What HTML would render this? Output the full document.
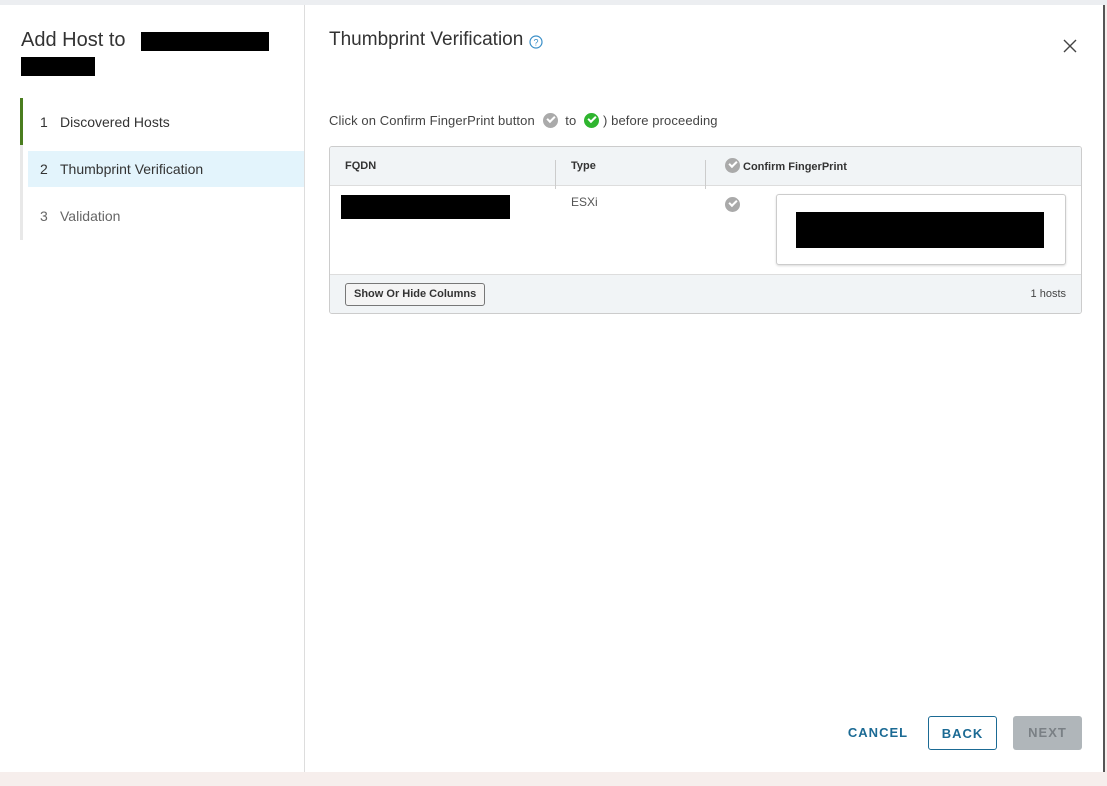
<!DOCTYPE html>
<html><head><style>
*{box-sizing:border-box;margin:0;padding:0}
body{width:1107px;height:786px;background:#f6eeec;font-family:"Liberation Sans",sans-serif;position:relative;overflow:hidden;color:#333}
.top{position:absolute;left:0;top:0;width:1107px;height:5px;background:#eceef1}
.modal{position:absolute;left:0;top:5px;width:1105px;height:767px;background:#fff;border-right:2px solid #555}
.side{position:absolute;left:0;top:0;width:305px;height:767px;border-right:1px solid #ddd}
.h1{position:absolute;left:21px;top:24px;font-size:20px;color:#333}
.blk{position:absolute;background:#000}
.steps{position:absolute;left:20px;top:93px;width:3px;height:142px;background:#e8e8e8}
.stepbar{position:absolute;left:20px;top:93px;width:3px;height:47px;background:#4a7d1f}
.step{position:absolute;left:28px;width:276px;height:36px;font-size:14px;line-height:36px;padding-left:12px}
.step span{display:inline-block;width:20px}
.title{position:absolute;left:329px;top:24px;font-size:19px;color:#333}
.close{position:absolute;left:1063px;top:34px}
.msg{position:absolute;left:329px;top:108px;font-size:13px;color:#444;letter-spacing:0.1px}
.ci{display:inline-block;width:15px;height:15px;border-radius:50%;vertical-align:-3px;position:relative;margin:0 4px}
.ci:after{content:"";position:absolute;left:4px;top:3px;width:6px;height:3px;border-left:2px solid #fff;border-bottom:2px solid #fff;transform:rotate(-45deg)}
.grid{position:absolute;left:329px;top:141px;width:753px;height:168px;border:1px solid #ccc;border-radius:3px;overflow:hidden}
.hd{position:absolute;left:0;top:0;width:100%;height:39px;background:#f1f4f6;border-bottom:1px solid #ddd;font-size:11px;font-weight:bold;color:#333}
.hd div{position:absolute;top:13px}
.sep{position:absolute;top:5px;width:1px;height:29px;background:#ccc}
.ft{position:absolute;left:0;top:127px;width:100%;height:40px;background:#f1f4f6;border-top:1px solid #ddd}
.btn{position:absolute;font-size:13px;font-weight:bold;letter-spacing:1px;text-align:center;line-height:34px;height:34px;border-radius:3px}
</style></head><body>
<div class="top"></div>
<div class="modal">
 <div class="side">
  <div class="h1">Add Host to</div>
  <div class="blk" style="left:141px;top:27px;width:128px;height:19px"></div>
  <div class="blk" style="left:21px;top:52px;width:74px;height:19px"></div>
  <div class="steps"></div><div class="stepbar"></div>
  <div class="step" style="top:99px;color:#333"><span>1</span>Discovered Hosts</div>
  <div class="step" style="top:146px;background:#e3f4fc;color:#333"><span>2</span>Thumbprint Verification</div>
  <div class="step" style="top:193px;color:#666"><span>3</span>Validation</div>
 </div>
 <div class="title">Thumbprint Verification <svg width="14" height="14" viewBox="0 0 14 14" style="vertical-align:-4px"><circle cx="7" cy="7" r="6" fill="none" stroke="#3a8fc8" stroke-width="1.2"/><text x="7" y="10.5" font-size="9" text-anchor="middle" fill="#3a8fc8" font-family="Liberation Sans">?</text></svg></div>
 <svg class="close" width="14" height="14" viewBox="0 0 14 14"><path d="M1 1L13 13M13 1L1 13" stroke="#444" stroke-width="1.4"/></svg>
 <div class="msg">Click on Confirm FingerPrint button <i class="ci" style="background:#aaa"></i> to <i class="ci" style="background:#2fb52f"></i>) before proceeding</div>
 <div class="grid">
  <div class="hd">
   <div style="left:15px">FQDN</div><div class="sep" style="left:225px"></div>
   <div style="left:241px">Type</div><div class="sep" style="left:375px"></div>
   <div style="left:395px;top:11px"><i class="ci" style="background:#aaa;margin:0 3px 0 0"></i>Confirm FingerPrint</div>
  </div>
  <div class="blk" style="left:11px;top:48px;width:169px;height:24px"></div>
  <div style="position:absolute;left:241px;top:48px;font-size:12px;color:#555">ESXi</div>
  <i class="ci" style="background:#aaa;position:absolute;left:395px;top:50px;margin:0"></i>
  <div style="position:absolute;left:446px;top:47px;width:290px;height:71px;border:1px solid #ccc;border-radius:3px;background:#fff;box-shadow:0 1px 2px rgba(0,0,0,.15)"></div>
  <div class="blk" style="left:466px;top:65px;width:248px;height:36px"></div>
  <div class="ft">
   <div style="position:absolute;left:15px;top:8px;height:23px;padding:0 8px;border:1px solid #777;border-radius:3px;background:#f4f4f4;font-size:11px;font-weight:bold;line-height:21px">Show Or Hide Columns</div>
   <div style="position:absolute;right:15px;top:13px;font-size:11px;color:#444">1 hosts</div>
  </div>
 </div>
 <div class="btn" style="left:843px;top:711px;width:70px;color:#1b6a94">CANCEL</div>
 <div class="btn" style="left:928px;top:711px;width:69px;border:1px solid #1b6a94;color:#1b6a94">BACK</div>
 <div class="btn" style="left:1013px;top:711px;width:69px;background:#b0b6ba;color:#7a8085">NEXT</div>
</div>
</body></html>
